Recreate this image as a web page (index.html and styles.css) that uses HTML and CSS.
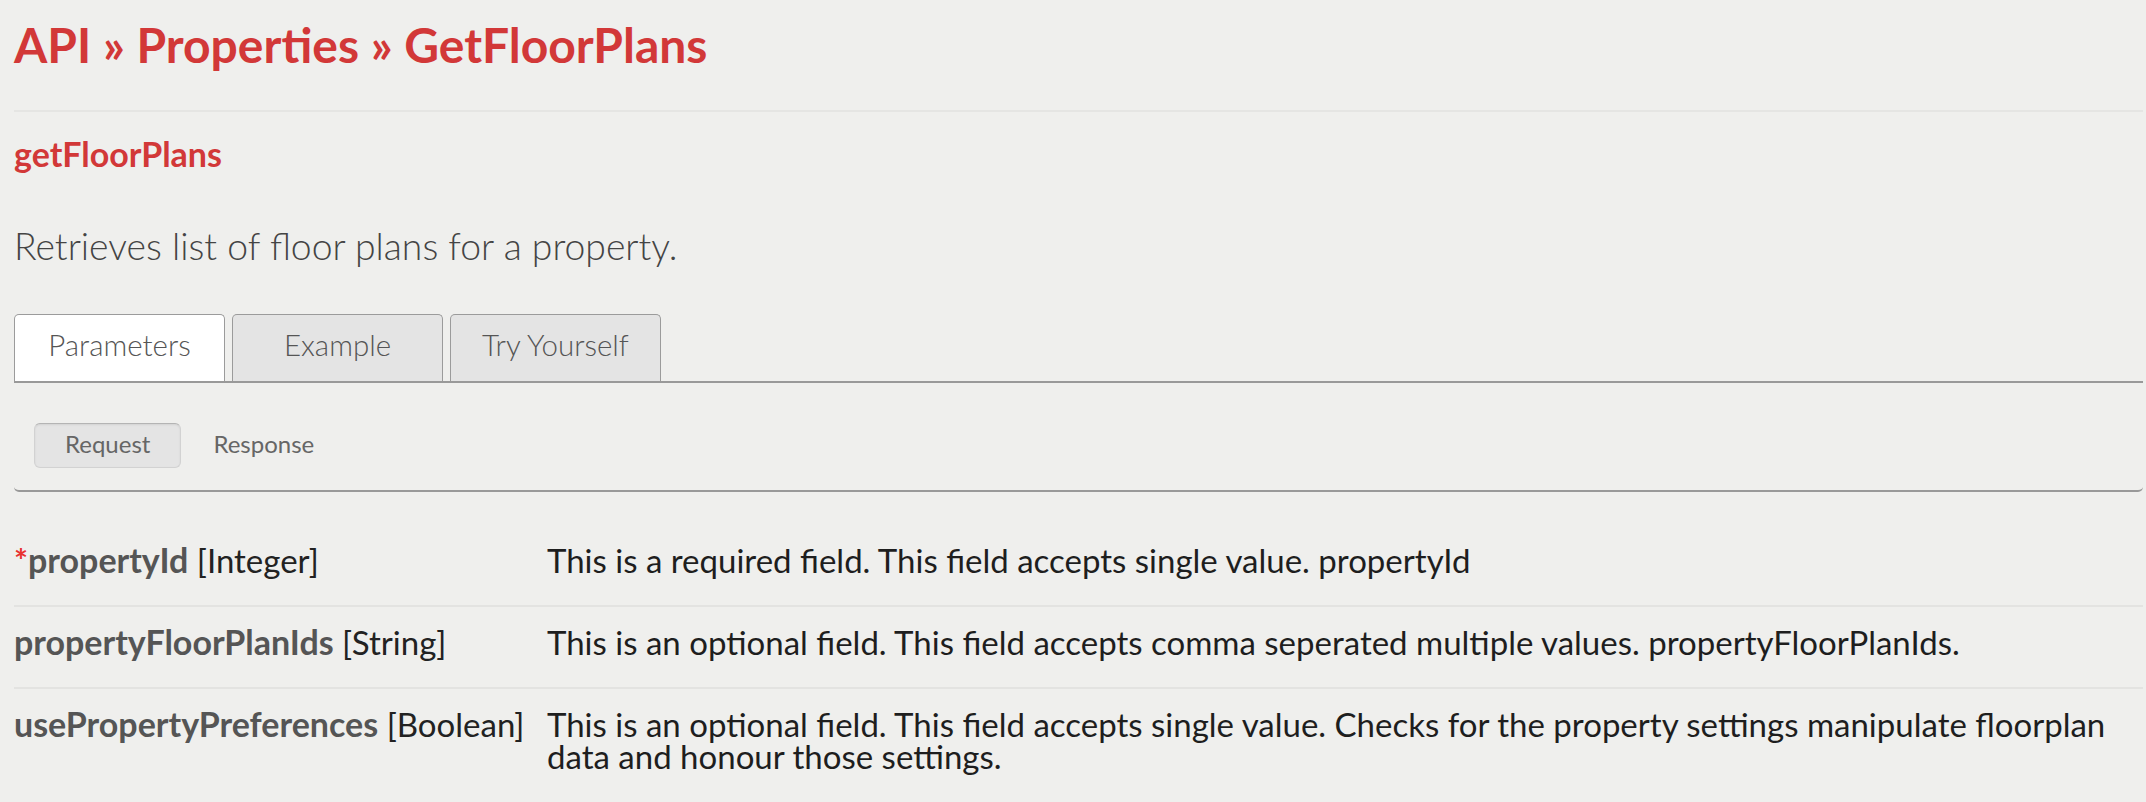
FILE: index.html
```html
<!DOCTYPE html>
<html>
<head>
<meta charset="utf-8">
<meta name="viewport" content="width=device-width, initial-scale=1">
<title>API » Properties » GetFloorPlans</title>
<link rel="stylesheet" href="styles.css">
</head>
<body>

<div id="page">
  <h1 class="pageTitle">API » Properties » GetFloorPlans</h1>

  <h3 class="methodName">getFloorPlans</h3>

  <p class="methodDesc">Retrieves list of floor plans for a property.</p>

  <div class="tabBar">
    <span class="tab active">Parameters</span>
    <span class="tab">Example</span>
    <span class="tab">Try Yourself</span>
  </div>

  <div class="subPanel">
    <span class="pill selected">Request</span>
    <span class="pill">Response</span>
  </div>

  <div class="paramList">
    <div class="paramRow">
      <div class="paramName"><span class="required">*</span><b>propertyId</b> [Integer]</div>
      <div class="paramDesc">This is a required field. This field accepts single value. propertyId</div>
    </div>
    <div class="paramRow">
      <div class="paramName"><b>propertyFloorPlanIds</b> [String]</div>
      <div class="paramDesc">This is an optional field. This field accepts comma seperated multiple values. propertyFloorPlanIds.</div>
    </div>
    <div class="paramRow">
      <div class="paramName"><b>usePropertyPreferences</b> [Boolean]</div>
      <div class="paramDesc">This is an optional field. This field accepts single value. Checks for the property settings manipulate floorplan data and honour those settings.</div>
    </div>
  </div>
</div>

</body>
</html>
```
FILE: styles.css
```css
body {
    margin: 0;
    background-color: #efefed;
    font-family: Lato, "Open Sans", sans-serif;
    color: #222;
}

#page {
    padding: 0 3px 0 14px;
}

.pageTitle {
    margin: 17px 0 0 0;
    padding-bottom: 37px;
    border-bottom: 2px solid #e5e5e3;
    font-size: 48px;
    line-height: 56px;
    font-weight: 700;
    color: #d23838;
}

.methodName {
    margin: 22px 0 0 0;
    font-size: 34px;
    line-height: 40px;
    font-weight: 700;
    color: #d23838;
}

.methodDesc {
    margin: 50px 0 0 0;
    font-size: 37.3px;
    line-height: 44px;
    font-weight: 300;
    color: #444;
}

/* tabs */

.tabBar {
    display: flex;
    gap: 7px;
    margin-top: 46px;
    border-bottom: 2px solid #999;
}

.tab {
    width: 211px;
    box-sizing: border-box;
    padding: 10px 0 16px 0;
    border: 1px solid #9b9b9b;
    border-bottom: none;
    border-radius: 5px 5px 0 0;
    background-color: #e4e4e4;
    text-align: center;
    font-size: 29.5px;
    line-height: 40px;
    font-weight: 300;
    color: #555;
}

.tab.active {
    background-color: #fff;
}

.subPanel {
    display: flex;
    gap: 1px;
    padding: 40px 20px 22px 20px;
    border-bottom: 2px solid #999;
    border-radius: 0 0 5px 5px;
}

.pill {
    padding: 5px 30px 8px 30px;
    border: 1px solid transparent;
    border-radius: 6px;
    font-size: 24px;
    line-height: 30px;
    color: #666;
}

.pill.selected {
    background-color: #e4e4e4;
    border-color: #d2d2d2;
    border-top-color: #b4b4b4;
    box-shadow: inset 0 1px 2px rgba(0, 0, 0, 0.08);
}

/* parameter table */

.paramList {
    margin-top: 33px;
}

.paramRow {
    display: grid;
    grid-template-columns: 533px 1fr;
    padding: 19px 0 29px 0;
    border-bottom: 2px solid #e3e3e1;
    font-size: 33px;
    line-height: 32px;
}

.paramRow:last-child {
    border-bottom: none;
}

.paramName b {
    font-size: 34px;
    color: #555;
}

.required {
    color: #e8312f;
    font-weight: 700;
}

.paramDesc {
    color: #1e1e1e;
}
```
